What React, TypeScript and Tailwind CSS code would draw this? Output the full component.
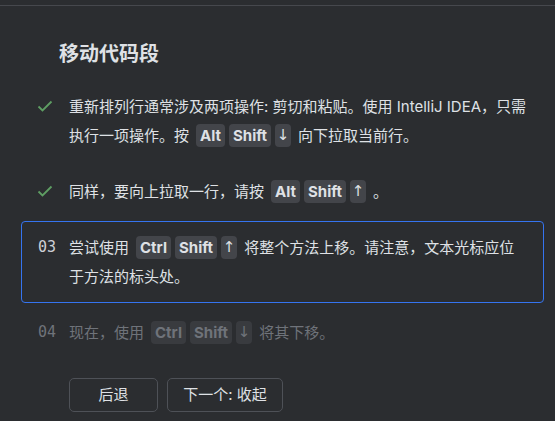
const Key = ({ k, dim }: { k: string; dim?: boolean }) => {
	const arrow = k === "↑" || k === "↓";
	return (
		<span
			className={`inline-flex items-center justify-center h-[23px] rounded-[4px] text-[15px] leading-none ${
				arrow ? "w-[16px] font-normal" : "px-[4px] font-bold"
			} ${dim ? "bg-[#393b3f] text-[#6f737a]" : "bg-[#43454a] text-[#dfe1e5]"}`}
			style={arrow ? { fontFamily: '"DejaVu Sans", sans-serif' } : undefined}
		>
			{k}
		</span>
	);
};

const Keys = ({ keys, dim }: { keys: string[]; dim?: boolean }) => (
	<span className="inline-flex gap-[4px] mx-[7px] align-middle -mt-[3px]">
		{keys.map((k) => (
			<Key key={k} k={k} dim={dim} />
		))}
	</span>
);

const Check = () => (
	<svg width="16" height="16" viewBox="0 0 16 16" className="-ml-[1px] -mt-[2px]">
		<path
			d="M1.5 8.5 L5.5 12.5 L14.5 3.5"
			fill="none"
			stroke="#5e9e63"
			strokeWidth="1.8"
		/>
	</svg>
);

const Step = ({
	marker,
	active,
	dim,
	children,
}: {
	marker: React.ReactNode;
	active?: boolean;
	dim?: boolean;
	children: React.ReactNode;
}) => (
	<div
		className={`flex px-4 py-[11px] border rounded-[4px] ${
			active ? "border-[#3574f0]" : "border-transparent"
		}`}
	>
		<div className="w-[31px] h-[29px] flex items-center shrink-0">{marker}</div>
		<p
			className={`w-[458px] text-[15px] leading-[29px] ${
				dim ? "text-[#6f737a]" : "text-[#dfe1e5]"
			}`}
		>
			{children}
		</p>
	</div>
);

const Num = ({ n, dim }: { n: string; dim?: boolean }) => (
	<span
		className={`text-[15px] ${dim ? "text-[#6f737a]" : "text-[#ced0d6]"}`}
		style={{ fontFamily: '"DejaVu Sans Mono", "Liberation Mono", monospace' }}
	>
		{n}
	</span>
);

export default function App() {
	return (
		<div
			className="w-[555px] h-[421px] bg-[#2b2d30] overflow-hidden text-[#dfe1e5]"
			style={{ fontFamily: 'Inter, "Noto Sans CJK SC", sans-serif' }}
		>
			<div className="h-[5px]" />
			<div className="h-px bg-[#46484d]" />
			<div className="pl-[21px] pr-[11px]">
				<h1 className="pl-[38px] pt-[34px] text-[20px] leading-[28px] font-bold">
					移动代码段
				</h1>
				<div className="mt-[12px] flex flex-col gap-[3px]">
					<Step marker={<Check />}>
						重新排列行通常涉及两项操作: 剪切和粘贴。使用 IntelliJ IDEA，只需执行一项操作。按
						<Keys keys={["Alt", "Shift", "↓"]} />
						向下拉取当前行。
					</Step>
					<Step marker={<Check />}>
						同样，要向上拉取一行，请按
						<Keys keys={["Alt", "Shift", "↑"]} />。
					</Step>
					<Step marker={<Num n="03" />} active>
						尝试使用
						<Keys keys={["Ctrl", "Shift", "↑"]} />
						将整个方法上移。请注意，文本光标应位于方法的标头处。
					</Step>
					<Step marker={<Num n="04" dim />} dim>
						现在，使用
						<Keys keys={["Ctrl", "Shift", "↓"]} dim />
						将其下移。
					</Step>
				</div>
				<div className="mt-[19px] pl-[48px] flex gap-[9px]">
					<button className="w-[89px] h-[34px] border border-[#4e5157] rounded-[5px] text-[15px] text-[#dfe1e5]">
						后退
					</button>
					<button className="w-[116px] h-[34px] border border-[#4e5157] rounded-[5px] text-[15px] text-[#dfe1e5]">
						下一个: 收起
					</button>
				</div>
			</div>
		</div>
	);
}
